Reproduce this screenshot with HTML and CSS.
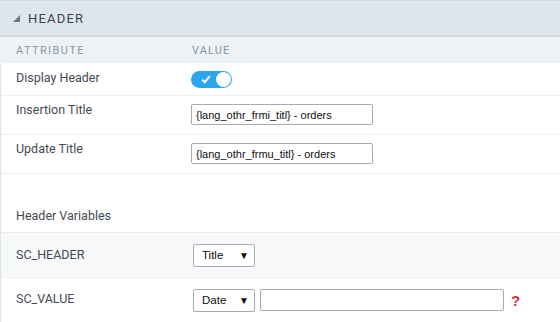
FILE: index.html
```html
<!DOCTYPE html>
<html>
<head>
  <link rel="stylesheet" href="styles.css">
</head>
<body>
  <div id="panel">
    <div class="section-head">
      <span class="caret"></span>
      <span class="section-title">HEADER</span>
    </div>
    <div class="col-head">
      <div class="col-attr">ATTRIBUTE</div>
      <div class="col-value">VALUE</div>
    </div>

    <div class="rows">
      <div class="row row-toggle">
        <div class="attr">Display Header</div>
        <div class="value">
          <span class="toggle">
            <svg class="check" width="10" height="9" viewBox="0 0 10 9"><path d="M1.2 4.8 L3.8 7.2 L8.8 1.2" fill="none" stroke="#fff" stroke-width="2"/></svg>
            <span class="knob"></span>
          </span>
        </div>
      </div>

      <div class="row row-input">
        <div class="attr">Insertion Title</div>
        <div class="value"><input type="text" class="text-field" value="{lang_othr_frmi_titl} - orders"></div>
      </div>

      <div class="row row-input">
        <div class="attr">Update Title</div>
        <div class="value"><input type="text" class="text-field" value="{lang_othr_frmu_titl} - orders"></div>
      </div>

      <div class="row row-group">
        <div class="attr">Header Variables</div>
      </div>

      <div class="row row-var shaded">
        <div class="attr">SC_HEADER</div>
        <div class="value">
          <div class="select">Title<span class="arrow">&#9660;</span></div>
        </div>
      </div>

      <div class="row row-var last">
        <div class="attr">SC_VALUE</div>
        <div class="value">
          <div class="select">Date<span class="arrow">&#9660;</span></div>
          <input type="text" class="var-field">
          <span class="help">?</span>
        </div>
      </div>
    </div>
  </div>
</body>
</html>
```

FILE: styles.css
```css
body {
  margin: 0;
  background-color: #ffffff;
  font-family: Roboto, "Liberation Sans", sans-serif;
  color: #434a56;
}
#panel {
  width: 560px;
  height: 322px;
  overflow: hidden;
}
.section-head {
  height: 34px;
  background-color: #dfe5ed;
  border-top: 1px solid #cfd9e1;
  border-bottom: 2px solid #d1dbe2;
  display: flex;
  align-items: center;
  padding-left: 13px;
}
.caret {
  width: 0;
  height: 0;
  border-left: 7px solid transparent;
  border-bottom: 7px solid #6c7683;
  margin-right: 8px;
  margin-top: 1px;
}
.section-title {
  font-size: 13px;
  letter-spacing: 1.2px;
  color: #3a4455;
}
.col-head {
  height: 26px;
  background-color: #eef2f5;
  display: flex;
  align-items: center;
  font-size: 11px;
  letter-spacing: 1.4px;
  color: #8497a8;
}
.col-attr {
  width: 176px;
  padding-left: 16px;
}
.col-value {
  letter-spacing: 1.1px;
}
.rows {
  border-left: 1px solid #d9e3ea;
}
.row {
  display: flex;
  align-items: center;
  border-bottom: 1px solid #ededed;
  font-size: 12.5px;
}
.row .attr {
  width: 175px;
  padding-left: 15px;
  line-height: 14px;
}
.row .value {
  display: flex;
  align-items: center;
}
.row-toggle {
  height: 32px;
}
.row-toggle .attr {
  margin-top: -2px;
}
.row-input {
  height: 38px;
  align-items: flex-start;
}
.row-input .attr {
  padding-top: 7px;
}
.row-input .value {
  padding-top: 8px;
}
.row-group {
  height: 58px;
  align-items: flex-end;
}
.row-group .attr {
  padding-bottom: 9px;
}
.row-var {
  height: 44px;
}
.row-var .value {
  padding-left: 2px;
}
.last .attr {
  margin-top: -2px;
}
.shaded {
  background-color: #f7f8fa;
}
.last {
  border-bottom: none;
}
.toggle {
  position: relative;
  width: 41px;
  height: 17px;
  border-radius: 9px;
  background-color: #2aa5ee;
  display: inline-block;
  margin-top: 1px;
}
.check {
  position: absolute;
  left: 10px;
  top: 4px;
}
.knob {
  position: absolute;
  right: 1px;
  top: 1px;
  width: 15px;
  height: 15px;
  border-radius: 50%;
  background-color: #ffffff;
}
.text-field {
  width: 182px;
  height: 21px;
  box-sizing: border-box;
  border: 1px solid #a3abb6;
  border-radius: 2px;
  padding: 0 4px;
  margin: 0;
  font-family: "Liberation Sans", Arial, sans-serif;
  font-size: 11px;
  color: #111111;
}
.select {
  width: 62px;
  height: 23px;
  box-sizing: border-box;
  border: 1px solid #a3abb6;
  border-radius: 2px;
  background-color: #ffffff;
  display: flex;
  align-items: center;
  justify-content: space-between;
  padding: 0 5px 0 8px;
  font-family: "Liberation Sans", Arial, sans-serif;
  font-size: 11.5px;
  color: #111111;
}
.arrow {
  font-size: 10px;
  color: #111111;
}
.var-field {
  width: 244px;
  height: 22px;
  box-sizing: border-box;
  border: 1px solid #a3abb6;
  border-radius: 2px;
  margin: 0 0 0 5px;
  padding: 0 4px;
}
.help {
  margin-left: 7px;
  color: #d9323f;
  font-family: "Liberation Sans", Arial, sans-serif;
  font-weight: bold;
  font-size: 15px;
}
```
